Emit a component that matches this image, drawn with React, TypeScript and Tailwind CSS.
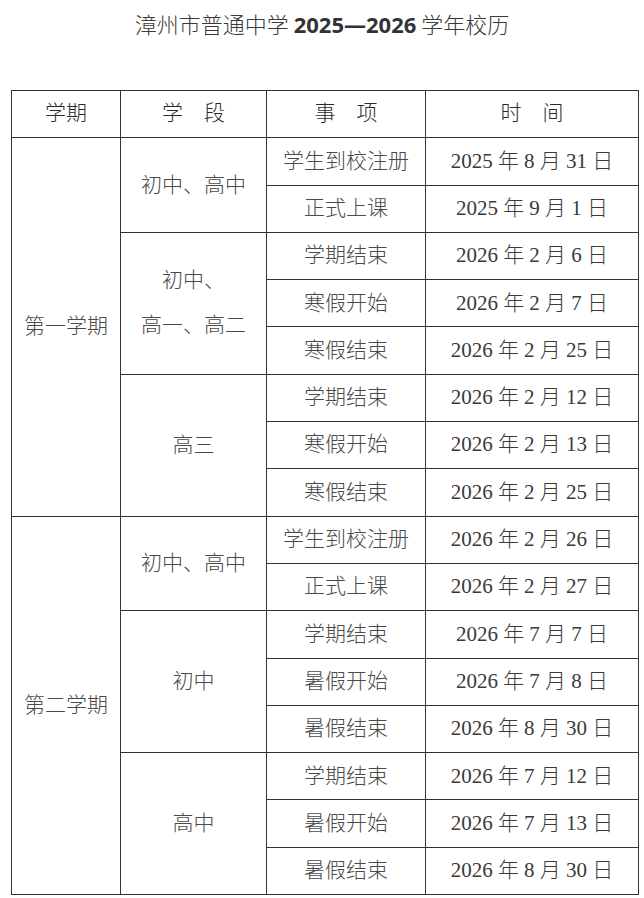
const rows = [
  { term: "第一学期", termSpan: 8, stage: ["初中、高中"], stageSpan: 2, item: "学生到校注册", date: "2025 年 8 月 31 日" },
  { item: "正式上课", date: "2025 年 9 月 1 日" },
  { stage: ["初中、", "高一、高二"], stageSpan: 3, item: "学期结束", date: "2026 年 2 月 6 日" },
  { item: "寒假开始", date: "2026 年 2 月 7 日" },
  { item: "寒假结束", date: "2026 年 2 月 25 日" },
  { stage: ["高三"], stageSpan: 3, item: "学期结束", date: "2026 年 2 月 12 日" },
  { item: "寒假开始", date: "2026 年 2 月 13 日" },
  { item: "寒假结束", date: "2026 年 2 月 25 日" },
  { term: "第二学期", termSpan: 8, stage: ["初中、高中"], stageSpan: 2, item: "学生到校注册", date: "2026 年 2 月 26 日" },
  { item: "正式上课", date: "2026 年 2 月 27 日" },
  { stage: ["初中"], stageSpan: 3, item: "学期结束", date: "2026 年 7 月 7 日" },
  { item: "暑假开始", date: "2026 年 7 月 8 日" },
  { item: "暑假结束", date: "2026 年 8 月 30 日" },
  { stage: ["高中"], stageSpan: 3, item: "学期结束", date: "2026 年 7 月 12 日" },
  { item: "暑假开始", date: "2026 年 7 月 13 日" },
  { item: "暑假结束", date: "2026 年 8 月 30 日" },
] as { term?: string; termSpan?: number; stage?: string[]; stageSpan?: number; item: string; date: string }[];

const cell = "border-[1.5px] border-[#333] text-center align-middle p-0";

export default function App() {
  return (
    <div className="w-[644px] min-h-[898px] bg-white text-[#4a4a4a] font-['Liberation_Serif','Noto_Sans_CJK_SC',serif]">
      <h1 className="pt-[9px] text-center text-[22px] leading-[28px] font-light text-[#3a3a3a] font-['Noto_Sans_CJK_SC',sans-serif]">
        漳州市普通中学{" "}
        <span className="font-bold text-[#333] font-['Open_Sans','Noto_Sans',sans-serif]">2025—2026</span>{" "}
        学年校历
      </h1>

      <table className="mt-[52px] ml-[11px] w-[627px] border-collapse table-fixed text-[21px] font-light">
        <colgroup>
          <col className="w-[109px]" />
          <col className="w-[146px]" />
          <col className="w-[159px]" />
          <col className="w-[213px]" />
        </colgroup>
        <thead>
          <tr className="h-[47.3px] text-[#2a2a2a]">
            <th className={`${cell} font-light`}>学期</th>
            <th className={`${cell} font-light`}>学　段</th>
            <th className={`${cell} font-light`}>事　项</th>
            <th className={`${cell} font-light`}>时　间</th>
          </tr>
        </thead>
        <tbody>
          {rows.map((r, i) => (
            <tr key={i} className="h-[47.3px]">
              {r.term && (
                <td rowSpan={r.termSpan} className={cell}>
                  {r.term}
                </td>
              )}
              {r.stage && (
                <td rowSpan={r.stageSpan} className={`${cell} leading-[45px]`}>
                  {r.stage.map((s) => (
                    <div key={s}>{s}</div>
                  ))}
                </td>
              )}
              <td className={cell}>{r.item}</td>
              <td className={`${cell} text-[#3a3a3a]`}>{r.date}</td>
            </tr>
          ))}
        </tbody>
      </table>
    </div>
  );
}
